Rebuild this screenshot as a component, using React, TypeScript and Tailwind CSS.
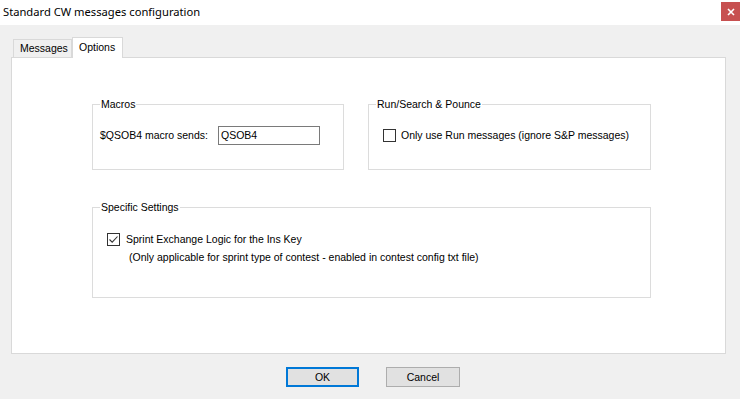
import React from 'react'

const ui = { fontFamily: '"Liberation Sans", Arial, sans-serif' }

function CheckBox({ checked }: { checked?: boolean }) {
  return (
    <span className="w-[13px] h-[13px] border border-[#333333] bg-white flex items-center justify-center shrink-0">
      {checked && (
        <svg width="11" height="11" viewBox="0 0 11 11">
          <path d="M1.5 5.5 L4.2 8.2 L9.5 2.5" fill="none" stroke="#333333" strokeWidth="1.1" />
        </svg>
      )}
    </span>
  )
}

function GroupBox({ title, className, children }: { title: string; className: string; children: React.ReactNode }) {
  return (
    <fieldset className={`border border-[#dcdcdc] ${className}`}>
      <legend className="ml-[7px] px-[1px] leading-[13px] text-[10.5px] text-[#000000]">{title}</legend>
      {children}
    </fieldset>
  )
}

export default function App() {
  return (
    <div className="w-[740px] h-[399px] bg-[#f0f0f0] flex flex-col overflow-hidden text-black" style={ui}>
      {/* Title bar */}
      <div className="h-[25px] bg-white flex justify-between shrink-0">
        <span className="pl-[3px] pt-[4px] text-[11.2px] leading-[16px]" style={{ fontFamily: '"Noto Sans", "Open Sans", sans-serif' }}>
          Standard CW messages configuration
        </span>
        <div className="mt-[2px] w-[19px] h-[19px] bg-[#c75050] flex items-center justify-center">
          <svg width="8" height="8" viewBox="0 0 8 8">
            <path d="M1 1 L7 7 M7 1 L1 7" stroke="white" strokeWidth="1.6" />
          </svg>
        </div>
      </div>

      <div className="px-[11px] pt-[12px]">
        {/* Tabs */}
        <div className="flex items-end h-[20px] pl-[2px] text-[10.5px]">
          <div className="w-[59px] h-[18px] border border-b-0 border-[#d9d9d9] bg-[#f0f0f0] pl-[6px] leading-[17px]">
            Messages
          </div>
          <div className="relative z-10 w-[51px] h-[21px] -mb-[1px] border border-b-0 border-[#d9d9d9] bg-white pl-[6px] leading-[18px]">
            Options
          </div>
        </div>

        {/* Panel */}
        <div className="w-[715px] h-[297px] border border-[#d9d9d9] bg-white pl-[80px] pt-[40px] text-[10.5px]">
          <div className="flex gap-[24px]">
            <GroupBox title="Macros" className="w-[252px] h-[72px]">
              <div className="flex items-center pl-[7px] pt-[15px]">
                <span className="w-[118px]">$QSOB4 macro sends:</span>
                <div className="w-[102px] h-[19px] border border-[#7a7a7a] bg-white pl-[2px] leading-[17px]">QSOB4</div>
              </div>
            </GroupBox>
            <GroupBox title="Run/Search & Pounce" className="w-[283px] h-[72px]">
              <div className="flex items-center gap-[5px] pl-[14px] pt-[17px]">
                <CheckBox />
                <span>Only use Run messages (ignore S&amp;P messages)</span>
              </div>
            </GroupBox>
          </div>

          <GroupBox title="Specific Settings" className="w-[559px] h-[97px] mt-[31px]">
            <div className="flex items-center gap-[6px] pl-[14px] pt-[18px]">
              <CheckBox checked />
              <span>Sprint Exchange Logic for the Ins Key</span>
            </div>
            <div className="pl-[36px] pt-[2px]">
              (Only applicable for sprint type of contest - enabled in contest config txt file)
            </div>
          </GroupBox>
        </div>
      </div>

      {/* Buttons */}
      <div className="flex gap-[27px] pl-[286px] mt-[13px] text-[10.5px]">
        <button className="w-[73px] h-[20px] border-2 border-[#0078d7] bg-[#e1e1e1] leading-[16px]">OK</button>
        <button className="w-[74px] h-[20px] border border-[#adadad] bg-[#e1e1e1] leading-[18px]">Cancel</button>
      </div>
    </div>
  )
}
